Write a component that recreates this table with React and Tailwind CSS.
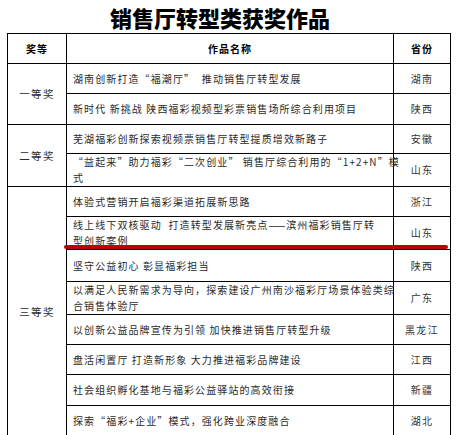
import React from 'react';

const rows = [
  { h: 'h-[30px]', name: <>湖南创新打造“福潮厅”&nbsp;&nbsp;推动销售厅转型发展</>, prov: '湖南', prize: '一等奖', span: 2 },
  { h: 'h-[31px]', name: '新时代 新挑战 陕西福彩视频型彩票销售场所综合利用项目', prov: '陕西' },
  { h: 'h-[29px]', name: '芜湖福彩创新探索视频票销售厅转型提质增效新路子', prov: '安徽', prize: '二等奖', span: 2 },
  { h: 'h-[33px]', name: <>“益起来”助力福彩“二次创业”&nbsp;销售厅综合利用的“1+2+N”模<br />式</>, prov: '山东' },
  { h: 'h-[30px]', name: '体验式营销开启福彩渠道拓展新思路', prov: '浙江', prize: '三等奖', span: 8 },
  { h: 'h-[31px]', name: <>线上线下双核驱动&nbsp;&nbsp;打造转型发展新亮点——滨州福彩销售厅转<br />型创新案例</>, prov: '山东' },
  { h: 'h-[32px]', name: '坚守公益初心 彰显福彩担当', prov: '陕西' },
  { h: 'h-[32px]', name: <>以满足人民新需求为导向，探索建设广州南沙福彩厅场景体验类综<br />合销售体验厅</>, prov: '广东' },
  { h: 'h-[30px]', name: '以创新公益品牌宣传为引领 加快推进销售厅转型升级', prov: '黑龙江' },
  { h: 'h-[30px]', name: '盘活闲置厅 打造新形象 大力推进福彩品牌建设', prov: '江西' },
  { h: 'h-[31px]', name: '社会组织孵化基地与福彩公益驿站的高效衔接', prov: '新疆' },
  { h: 'h-[31px]', name: '探索“福彩+企业”模式，强化跨业深度融合', prov: '湖北' },
];

const cell = 'border border-black';

export default function App() {
  return (
    <div className="relative w-[456px] h-[435px] overflow-hidden bg-white text-[#2a2a2a]" style={{ fontFamily: '"Noto Sans CJK SC", sans-serif' }}>
      <div className="h-[33px] flex items-center justify-center pr-[16px]">
        <h1 className="text-[22px] leading-none font-black text-black">销售厅转型类获奖作品</h1>
      </div>

      <table className="ml-[7px] w-[443px] table-fixed border-collapse">
        <colgroup>
          <col className="w-[59px]" />
          <col className="w-[327px]" />
          <col className="w-[57px]" />
        </colgroup>
        <thead>
          <tr className="h-[30px] text-[10px] font-black text-black tracking-[1px]">
            <th className={cell}>奖等</th>
            <th className={cell}>作品名称</th>
            <th className={cell}>省份</th>
          </tr>
        </thead>
        <tbody className="text-[10px] leading-[16px] tracking-[1.1px]">
          {rows.map((r, i) => (
            <tr key={i} className={r.h}>
              {r.prize && (
                <td rowSpan={r.span} className={`${cell} text-center align-middle text-[10.5px] tracking-[1.3px]`}>{r.prize}</td>
              )}
              <td className={`${cell} px-[6px] whitespace-nowrap`}>{r.name}</td>
              <td className={`${cell} text-center text-[#333] tracking-[1.3px]`}>{r.prov}</td>
            </tr>
          ))}
          <tr className="h-[30px]">
            <td className={cell}></td>
            <td className={cell}></td>
            <td className={cell}></td>
          </tr>
        </tbody>
      </table>

      {/* red marker line */}
      <div className="absolute left-[64px] top-[245px] w-[384px] h-[4px] bg-[#c00000] rounded-full" />
    </div>
  );
}
